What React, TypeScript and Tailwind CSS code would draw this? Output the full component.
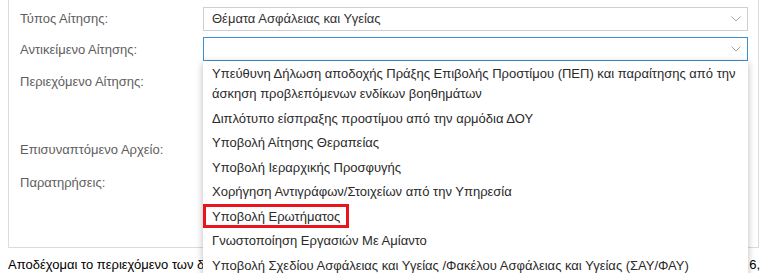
const options = [
  "Υπεύθυνη Δήλωση αποδοχής Πράξης Επιβολής Προστίμου (ΠΕΠ) και παραίτησης από την άσκηση προβλεπόμενων ενδίκων βοηθημάτων",
  "Διπλότυπο είσπραξης προστίμου από την αρμόδια ΔΟΥ",
  "Υποβολή Αίτησης Θεραπείας",
  "Υποβολή Ιεραρχικής Προσφυγής",
  "Χορήγηση Αντιγράφων/Στοιχείων από την Υπηρεσία",
  "Υποβολή Ερωτήματος",
  "Γνωστοποίηση Εργασιών Με Αμίαντο",
  "Υποβολή Σχεδίου Ασφάλειας και Υγείας /Φακέλου Ασφάλειας και Υγείας (ΣΑΥ/ΦΑΥ)",
];

const Chevron = () => (
  <svg width="10" height="6" viewBox="0 0 10 6" className="shrink-0">
    <polyline points="0.5,0.5 5,5 9.5,0.5" fill="none" stroke="#a8a8a8" strokeWidth="1" />
  </svg>
);

const Label = ({ children, className = "" }: { children: React.ReactNode; className?: string }) => (
  <div className={`pl-[11px] text-[13px] leading-[16px] text-[#5e5e5e] ${className}`}>{children}</div>
);

export default function App() {
  return (
    <div className="w-[764px] h-[273px] overflow-hidden bg-white font-['Liberation_Sans',Arial,sans-serif] text-[13px]">
      {/* form panel */}
      <div className="ml-[8px] w-[751px] border-x border-b border-[#dcdcdc] pt-[7px] pb-[10px]">
        <div className="grid grid-cols-[194px_545px] gap-y-[6px]">
          <Label className="self-center">Τύπος Αίτησης:</Label>
          <div className="h-[24px] border border-[#cfcfcf] flex items-center justify-between pl-[8px] pr-[6px] text-[#333]">
            <span>Θέματα Ασφάλειας και Υγείας</span>
            <Chevron />
          </div>

          <Label className="self-center pt-[2px]">Αντικείμενο Αίτησης:</Label>
          <div className="relative z-10">
            <div className="h-[24px] border border-[#3b8fd4] flex items-center justify-end pr-[6px]">
              <Chevron />
            </div>
            {/* open option list */}
            <ul className="absolute left-0 top-[24px] w-[545px] pt-[1px] bg-white shadow-[0_2px_7px_rgba(0,0,0,0.28)] text-[#2a2a2a]">
              {options.map((o) => (
                <li key={o} className="px-[9px] py-[2.25px] leading-[20px]">
                  {o === "Υποβολή Ερωτήματος" ? (
                    <span className="relative">
                      {o}
                      <span className="absolute -left-[9px] -right-[9px] -top-[5px] -bottom-[4px] border-[3px] border-[#e8151f]" />
                    </span>
                  ) : (
                    o
                  )}
                </li>
              ))}
            </ul>
          </div>

          <Label className="pt-[7px]">Περιεχόμενο Αίτησης:</Label>
          <div className="h-[65px] border border-[#cfcfcf]" />

          <Label className="self-center">Επισυναπτόμενο Αρχείο:</Label>
          <div className="h-[24px]" />

          <Label className="pt-[7px]">Παρατηρήσεις:</Label>
          <div className="h-[69px] border border-[#cfcfcf]" />
        </div>
      </div>

      <div className="mt-[9px] flex justify-between pl-[8px] pr-[4px] leading-[16px] text-black">
        <span>Αποδέχομαι το περιεχόμενο των δηλώσεων και τους όρους της υπηρεσίας, άρθρο</span>
        <span>6,</span>
      </div>
    </div>
  );
}
